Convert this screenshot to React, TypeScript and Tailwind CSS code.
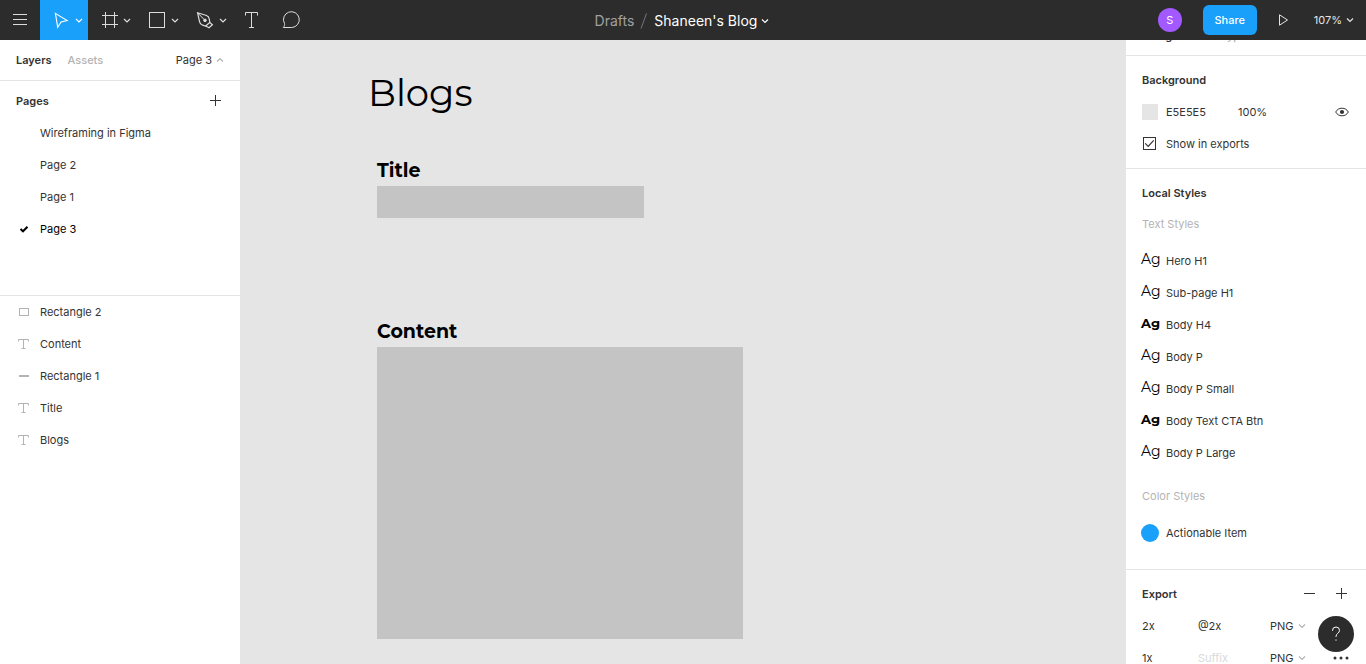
import type { ReactNode } from "react";

const pages = ["Wireframing in Figma", "Page 2", "Page 1", "Page 3"];

type LayerKind = "rect" | "text" | "line";

const layers: { name: string; kind: LayerKind }[] = [
  { name: "Rectangle 2", kind: "rect" },
  { name: "Content", kind: "text" },
  { name: "Rectangle 1", kind: "line" },
  { name: "Title", kind: "text" },
  { name: "Blogs", kind: "text" },
];

const textStyles = [
  { name: "Hero H1", bold: false },
  { name: "Sub-page H1", bold: false },
  { name: "Body H4", bold: true },
  { name: "Body P", bold: false },
  { name: "Body P Small", bold: false },
  { name: "Body Text CTA Btn", bold: true },
  { name: "Body P Large", bold: false },
];

const exportsList = [
  { scale: "2x", suffix: "@2x" },
  { scale: "1x", suffix: "" },
];

function Chevron({ up = false, className = "" }: { up?: boolean; className?: string }) {
  return (
    <svg
      width="8"
      height="8"
      viewBox="0 0 8 8"
      fill="none"
      stroke="currentColor"
      strokeWidth="1.2"
      className={className}
      aria-hidden="true"
    >
      <path d={up ? "M1 5.5l3-3 3 3" : "M1 2.5l3 3 3-3"} />
    </svg>
  );
}

function Tool({
  label,
  wide = false,
  active = false,
  children,
}: {
  label: string;
  wide?: boolean;
  active?: boolean;
  children: ReactNode;
}) {
  const width = wide ? 48 : 40;
  return (
    <button type="button" aria-label={label} className={active ? "bg-[#18a0fb] text-white" : "text-[#dcdcdc]"}>
      <svg width={width} height="40" viewBox={`0 0 ${width} 40`} fill="none" stroke="currentColor" aria-hidden="true">
        {children}
        {wide && <path d="M36 19l3 3 3-3" strokeWidth="1.2" />}
      </svg>
    </button>
  );
}

function Plus() {
  return (
    <svg width="11" height="11" viewBox="0 0 11 11" stroke="currentColor" aria-hidden="true">
      <path d="M5.5 0v11M0 5.5h11" />
    </svg>
  );
}

function LayerIcon({ kind }: { kind: LayerKind }) {
  return (
    <svg width="12" height="12" viewBox="0 0 12 12" fill="none" stroke="#b3b3b3" aria-hidden="true">
      {kind === "rect" && <rect x="1.5" y="2.5" width="9" height="7" />}
      {kind === "line" && <path d="M1 6h10" strokeWidth="2" />}
      {kind === "text" && <path d="M.5 3.5v-2h10v2M5.5 1.5v9M3.5 10.5h4" />}
    </svg>
  );
}

function Header() {
  return (
    <header className="grid h-10 shrink-0 grid-cols-[1fr_auto_1fr] items-center bg-[#2c2c2c] text-white">
      <div className="flex">
        <Tool label="Main menu">
          <path d="M13 14.5h14M13 19.5h14M13 24.5h14" />
        </Tool>
        <Tool label="Move" wide active>
          <path d="M15.4 13.4l11.7 7.1-6 1.4-3.4 5.3z" strokeWidth="1.1" />
        </Tool>
        <Tool label="Frame" wide>
          <path d="M17.5 12v16M26.5 12v16M14 15.5h16M14 24.5h16" />
        </Tool>
        <Tool label="Rectangle" wide>
          <rect x="13.5" y="12.5" width="15" height="15" />
        </Tool>
        <Tool label="Pen" wide>
          <path d="M13.6 12.8l8.9 2.7c1.7.6 2.6 1.9 2.8 3.7l.5 3.2-4.2 3.6-3-.9c-1.8-.5-2.6-1.500-3-3.300z" strokeWidth="1.2" />
          <path d="M13.6 12.8l6.8 7" />
          <path d="M25.8 22.400l2.600 2.300-3.400 3-3.200-1.700" strokeWidth="1.2" />
          <circle cx="21" cy="20.4" r="1.3" fill="currentColor" />
        </Tool>
        <Tool label="Text">
          <path d="M13.5 15.5v-3h12v3M19.5 12.5v15M17 27.5h5" />
        </Tool>
        <Tool label="Comment">
          <path d="M11.3 27.5c1.1-1.3 1.5-2.5 1.200-4a7.900 7.900 0 1 1 7.300 4z" />
        </Tool>
      </div>
      <div className="flex items-center pt-px pr-[2px] text-sm">
        <a href="#drafts" className="text-[#a0a0a0]">
          Drafts
        </a>
        <svg width="20" height="18" viewBox="0 0 20 18" stroke="#777" aria-hidden="true">
          <path d="M7 16.5L12.5 1.5" />
        </svg>
        <button type="button" className="flex items-center gap-1">
          Shaneen's Blog
          <Chevron />
        </button>
      </div>
      <div className="flex items-center justify-end pr-3 text-[11px]">
        <span className="mr-[21px] flex size-6 items-center justify-center rounded-full bg-[#a259ff]">S</span>
        <button type="button" className="h-[30px] w-[54px] rounded-md bg-[#18a0fb] font-medium">
          Share
        </button>
        <button type="button" aria-label="Present" className="ml-5 text-[#e5e5e5]">
          <svg width="12" height="12" viewBox="0 0 12 12" fill="none" stroke="currentColor" aria-hidden="true">
            <path d="M2.5 .8v10.400l8-5.200z" />
          </svg>
        </button>
        <button type="button" className="ml-[25px] flex items-center gap-1 text-[#e5e5e5]">
          107%
          <Chevron />
        </button>
      </div>
    </header>
  );
}

function LeftPanel() {
  return (
    <aside className="flex w-60 shrink-0 flex-col bg-white">
      <div className="flex h-[41px] shrink-0 items-center border-b border-[#e5e5e5] px-4">
        <button type="button" className="mr-4 font-semibold">
          Layers
        </button>
        <button type="button" className="font-medium text-[#b3b3b3]">
          Assets
        </button>
        <button type="button" className="ml-auto flex items-center gap-1">
          Page 3
          <Chevron up className="text-[#b3b3b3]" />
        </button>
      </div>
      <section className="border-b border-[#e5e5e5] pt-1 pb-[50px]">
        <div className="flex h-8 items-center justify-between pr-[19px] pl-4">
          <h2 className="font-semibold">Pages</h2>
          <button type="button" aria-label="Add page" className="pb-px">
            <Plus />
          </button>
        </div>
        <ul>
          {pages.map((page) => (
            <li key={page} className="flex h-8 items-center pl-4">
              <span className="w-6">
                {page === "Page 3" && (
                  <svg width="16" height="16" viewBox="0 0 16 16" fill="none" stroke="#000" strokeWidth="2" aria-hidden="true">
                    <path d="M4.5 8l2.5 2.300 4.500-4.600" />
                  </svg>
                )}
              </span>
              <span className={page === "Page 3" ? "text-black" : ""}>{page}</span>
            </li>
          ))}
        </ul>
      </section>
      <ul>
        {layers.map((layer) => (
          <li key={layer.name} className="flex h-8 items-center gap-[10px] pl-[18px]">
            <LayerIcon kind={layer.kind} />
            {layer.name}
          </li>
        ))}
      </ul>
    </aside>
  );
}

function Canvas() {
  return (
    <main className="min-w-0 flex-1 overflow-hidden pt-[29px] pl-[137px] font-['Montserrat','Inter',sans-serif] text-black">
      <h1 className="-ml-[9px] text-[37px] leading-[48px] font-normal">Blogs</h1>
      <h2 className="mt-10 text-[19px] leading-7 font-bold">Title</h2>
      <div className="mt-px h-8 w-[267px] bg-[#c4c4c4]" />
      <h2 className="mt-[100px] text-[19px] leading-7 font-bold">Content</h2>
      <div className="mt-px h-[292px] w-[366px] bg-[#c4c4c4]" />
    </main>
  );
}

function RightPanel() {
  return (
    <aside className="w-60 shrink-0 overflow-hidden bg-white">
      <div className="-mt-6 flex h-10 items-center gap-4 border-b border-[#e5e5e5] px-4">
        <button type="button" className="font-semibold">
          Design
        </button>
        <button type="button" className="font-medium text-[#b3b3b3]">
          Prototype
        </button>
      </div>

      <section className="border-b border-[#e5e5e5] px-4 py-2">
        <h2 className="flex h-8 items-center font-semibold">Background</h2>
        <div className="flex h-8 items-center">
          <span className="mr-2 size-4 bg-[#e5e5e5]" />
          <input aria-label="Background color" defaultValue="E5E5E5" className="w-[72px] outline-none" />
          <input aria-label="Background opacity" defaultValue="100%" className="w-14 outline-none" />
          <button type="button" aria-label="Toggle visibility" className="ml-auto">
            <svg width="16" height="16" viewBox="0 0 16 16" fill="none" stroke="currentColor" aria-hidden="true">
              <path d="M1.7 8C3 5.5 5.3 4.2 8 4.2S13 5.5 14.3 8C13 10.5 10.7 11.8 8 11.8S3 10.5 1.7 8z" />
              <circle cx="8" cy="8" r="2.1" fill="currentColor" stroke="none" />
            </svg>
          </button>
        </div>
        <label className="flex h-8 items-center gap-2">
          <span className="grid size-4 place-items-start p-px">
            <input
              type="checkbox"
              defaultChecked
              className="peer col-start-1 row-start-1 size-[13px] appearance-none border border-[#333]"
            />
            <svg
              width="13"
              height="13"
              viewBox="0 0 13 13"
              fill="none"
              stroke="currentColor"
              className="pointer-events-none invisible col-start-1 row-start-1 peer-checked:visible"
              aria-hidden="true"
            >
              <path d="M2.2 6.3l3 3 5.500-6" strokeWidth="1.2" />
            </svg>
          </span>
          Show in exports
        </label>
      </section>

      <section className="border-b border-[#e5e5e5] px-4 pt-2 pb-5">
        <h2 className="flex h-8 items-center font-semibold">Local Styles</h2>
        <h3 className="flex h-[30px] items-center text-[#b3b3b3]">Text Styles</h3>
        <ul className="mt-[6px]">
          {textStyles.map((style) => (
            <li key={style.name} className="flex h-8 items-center">
              <span
                className={
                  style.bold
                    ? "-ml-px w-[25px] pb-1 font-['Montserrat','Inter',sans-serif] text-[13px] leading-4 font-bold text-black"
                    : "-ml-px w-[25px] pb-1 font-['Montserrat','Inter',sans-serif] text-[14px] leading-4 text-black"
                }
              >
                Ag
              </span>
              {style.name}
            </li>
          ))}
        </ul>
        <h3 className="mt-3 flex h-[30px] items-center text-[#b3b3b3]">Color Styles</h3>
        <div className="mt-[6px] flex h-8 items-center">
          <span className="mr-[7px] -ml-px size-[18px] rounded-full bg-[#18a0fb]" />
          Actionable Item
        </div>
      </section>

      <section className="pt-2 pl-4">
        <div className="flex h-8 items-center pr-[9px]">
          <h2 className="mr-auto font-semibold">Export</h2>
          <button type="button" aria-label="Remove export" className="flex size-8 items-center justify-center pb-px">
            <svg width="11" height="11" viewBox="0 0 11 11" stroke="currentColor" aria-hidden="true">
              <path d="M0 5.5h11" />
            </svg>
          </button>
          <button type="button" aria-label="Add export" className="flex size-8 items-center justify-center pb-px">
            <Plus />
          </button>
        </div>
        {exportsList.map((row) => (
          <div key={row.scale} className="flex h-8 items-center pr-[9px]">
            <input aria-label="Scale" defaultValue={row.scale} className="w-14 outline-none" />
            <input
              aria-label="Suffix"
              defaultValue={row.suffix}
              placeholder="Suffix"
              className="w-[72px] outline-none placeholder:text-[#d9d9d9]"
            />
            <span className="grid w-9 items-center">
              <select aria-label="Format" defaultValue="PNG" className="col-start-1 row-start-1 w-full appearance-none outline-none">
                <option>PNG</option>
                <option>JPG</option>
                <option>SVG</option>
              </select>
              <Chevron className="pointer-events-none col-start-1 row-start-1 justify-self-end text-[#b3b3b3]" />
            </span>
            <button type="button" aria-label="Export options" className="ml-auto flex size-8 items-center justify-center">
              <svg width="16" height="4" viewBox="0 0 16 4" fill="currentColor" aria-hidden="true">
                <circle cx="2" cy="2" r="1.5" />
                <circle cx="8" cy="2" r="1.5" />
                <circle cx="14" cy="2" r="1.5" />
              </svg>
            </button>
          </div>
        ))}
      </section>
    </aside>
  );
}

export default function App() {
  return (
    <div className="flex h-screen flex-col overflow-hidden bg-[#e5e5e5] font-['Inter',sans-serif] text-[11px] leading-4 text-[#333]">
      <Header />
      <div className="flex min-h-0 flex-1">
        <LeftPanel />
        <Canvas />
        <RightPanel />
      </div>
      <button
        type="button"
        aria-label="Help"
        className="fixed right-3 bottom-3 flex size-9 items-center justify-center rounded-full bg-[#2c2c2c] text-white"
      >
        <svg width="12" height="16" viewBox="0 0 12 16" fill="none" stroke="currentColor" aria-hidden="true">
          <path d="M2.5 5V4.500a3.500 3.500 0 0 1 7 0c0 2.500-3.500 3-3.500 6v.500" />
          <path d="M6 13.5v1.2" />
        </svg>
      </button>
    </div>
  );
}
